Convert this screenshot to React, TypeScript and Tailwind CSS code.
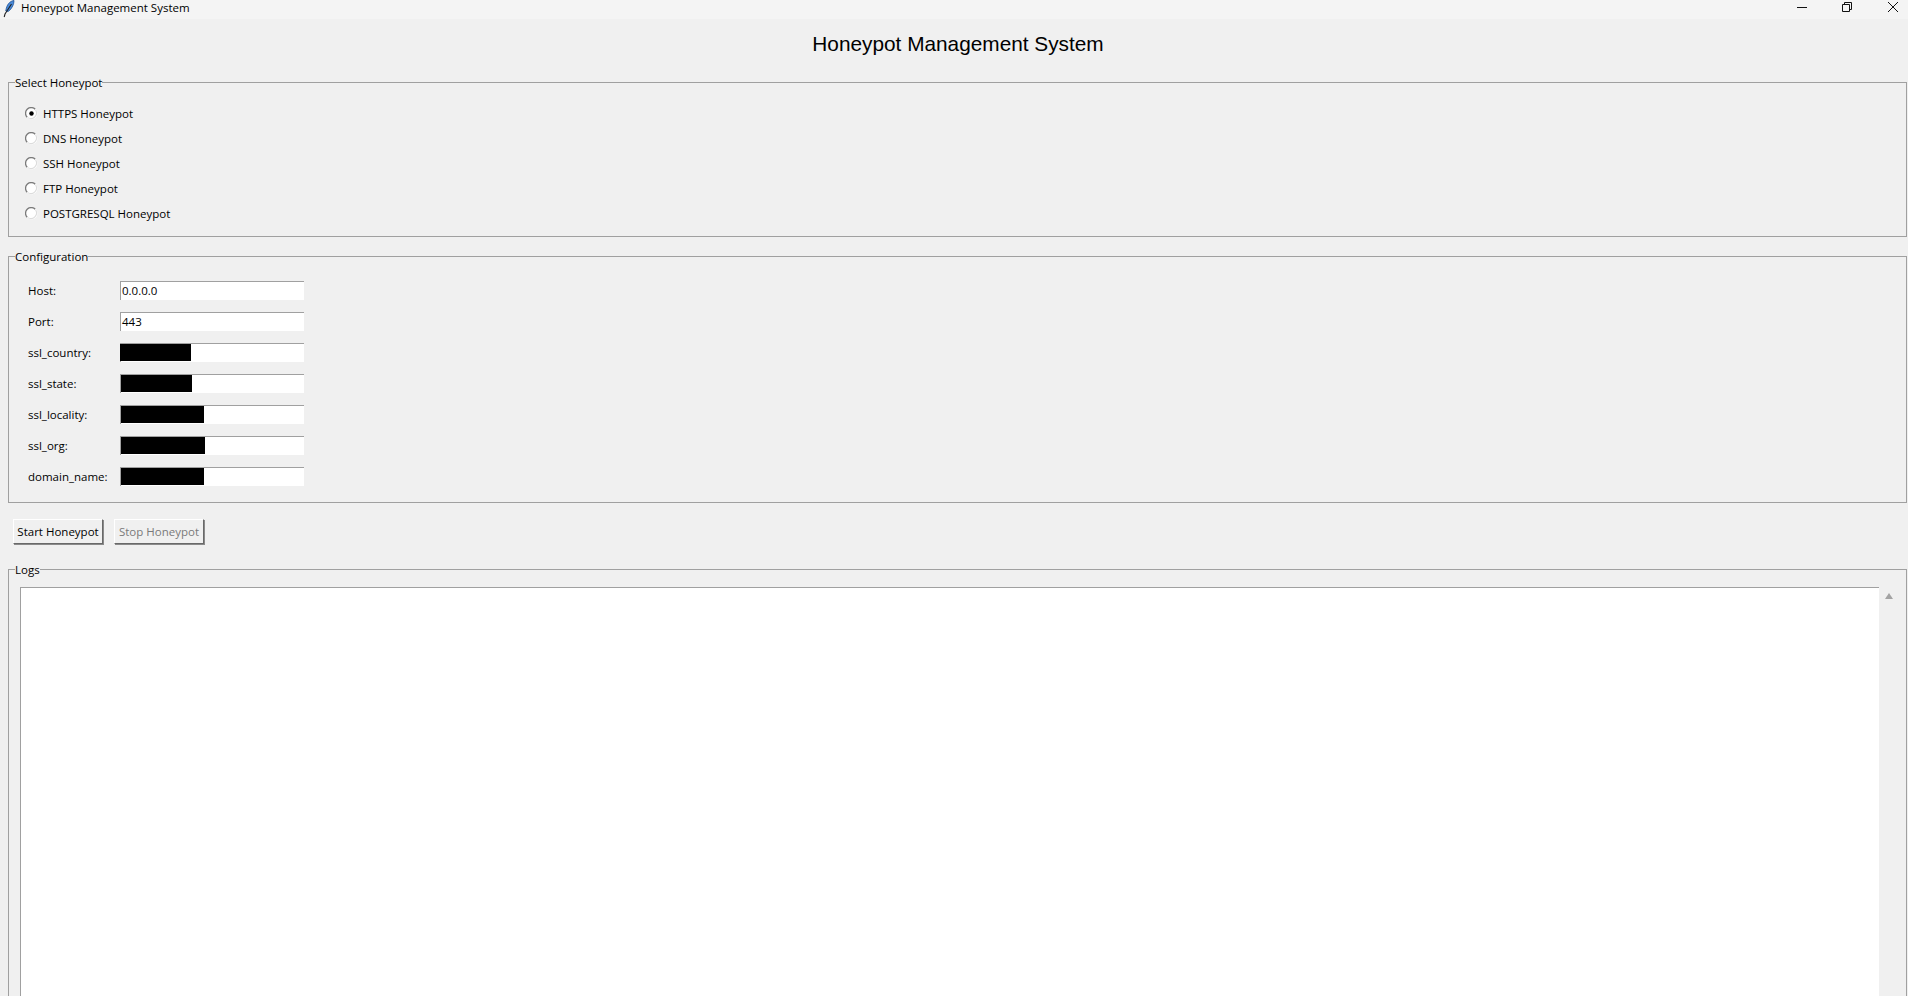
const radios = ["HTTPS Honeypot", "DNS Honeypot", "SSH Honeypot", "FTP Honeypot", "POSTGRESQL Honeypot"];
const fields: { label: string; value?: string; bar?: number; off?: boolean }[] = [
  { label: "Host:", value: "0.0.0.0" },
  { label: "Port:", value: "443" },
  { label: "ssl_country:", bar: 71, off: true },
  { label: "ssl_state:", bar: 71 },
  { label: "ssl_locality:", bar: 83 },
  { label: "ssl_org:", bar: 84 },
  { label: "domain_name:", bar: 83 },
];

function Radio({ on }: { on: boolean }) {
  return (
    <svg width="13" height="13" viewBox="0 0 13 13" className="shrink-0">
      <circle cx="6.5" cy="6.5" r="6" fill="#ffffff" />
      <path d="M2.2 10.2 A5.5 5.5 0 0 1 10.2 2.2" fill="none" stroke="#7a7a7a" strokeWidth="1.3" />
      <path d="M10.6 3 A5.5 5.5 0 0 1 3 10.6" fill="none" stroke="#dcdcdc" strokeWidth="1.1" />
      {on && <circle cx="6.5" cy="6.5" r="2.2" fill="#000000" />}
    </svg>
  );
}

function Group({ title, className, children }: { title: string; className: string; children: React.ReactNode }) {
  return (
    <fieldset className={`border border-[#a0a0a0] ml-2 mr-[1px] min-w-0 ${className}`}>
      <legend className="ml-[6px] h-[16px] text-[11.5px] leading-[18px] text-black">{title}</legend>
      {children}
    </fieldset>
  );
}

function Feather() {
  return (
    <svg width="12" height="18" viewBox="0 0 12 18" className="ml-[3px] shrink-0 -mt-[1px]">
      <path d="M11 0.5 C7 1 3.5 4.5 2.8 11 C4 12 5.5 11.5 6.5 10.5 C9 8 11 4.5 11 0.5Z" fill="#4a8ad8" stroke="#1c4f94" strokeWidth="0.8" />
      <path d="M8.5 4 L2 14 L1.2 17" stroke="#222222" strokeWidth="1.1" fill="none" />
    </svg>
  );
}

function Btn({ label, disabled }: { label: string; disabled?: boolean }) {
  return (
    <div
      className={`w-[90px] h-[25px] flex items-center justify-center border border-t-white border-l-white border-r-[#696969] border-b-[#696969] shadow-[1px_1px_0_#8a8a8a] text-[11.5px] bg-[#f0f0f0] ${disabled ? "text-[#7a7a7a]" : "text-black"}`}
    >
      {label}
    </div>
  );
}

export default function App() {
  return (
    <div className="w-[1908px] h-[996px] overflow-hidden bg-[#f0f0f0] font-['Open_Sans','Noto_Sans',sans-serif] text-[11.5px] text-black">
      <div className="h-[19px] bg-[#f4f4f4] flex items-center">
        <Feather />
        <span className="ml-[6px] text-[11.5px] leading-[16px] -mt-[4px]">Honeypot Management System</span>
        <div className="ml-auto flex items-center text-[#111111] -mt-[6px]">
          <svg width="12" height="12" viewBox="0 0 12 12" className="mr-[33px]"><path d="M1 6.5H11" stroke="#111" strokeWidth="1" /></svg>
          <svg width="12" height="12" viewBox="0 0 12 12" className="mr-[34px]"><path d="M1.5 3.5H8.5V10.5H1.5Z M3.5 3.5V1.5H10.5V8.5H8.5" fill="none" stroke="#111" strokeWidth="1" /></svg>
          <svg width="12" height="12" viewBox="0 0 12 12" className="mr-[9px]"><path d="M1 1L11 11M11 1L1 11" stroke="#111" strokeWidth="1" /></svg>
        </div>
      </div>

      <h1 className="h-[55px] pt-[12px] pl-[8px] text-center font-['Liberation_Sans',sans-serif] text-[20.8px] leading-[26px] text-black">
        Honeypot Management System
      </h1>

      <Group title="Select Honeypot" className="h-[163px]">
        <div className="flex flex-col pl-[16px] pt-[11px]">
          {radios.map((r, i) => (
            <div key={r} className="h-[25px] flex items-center gap-[5px]">
              <span className="-mt-[1px]"><Radio on={i === 0} /></span>
              <span className="leading-[16px]">{r}</span>
            </div>
          ))}
        </div>
      </Group>

      <Group title="Configuration" className="mt-[11px] h-[255px]">
        <div className="flex flex-col gap-[12px] pl-[19px] pt-[17px]">
          {fields.map((f) => (
            <div key={f.label} className="h-[19px] flex items-center">
              <span className="w-[92px] leading-[18px]">{f.label}</span>
              <div className="w-[184px] h-[19px] bg-white border-t border-l border-[#a0a0a0] flex items-start">
                {f.value && <span className="ml-[1px] leading-[18px]">{f.value}</span>}
                {f.bar && (
                  <div
                    className={`h-[17px] bg-black ${f.off ? "-ml-[1px]" : ""}`}
                    style={{ width: f.bar }}
                  />
                )}
              </div>
            </div>
          ))}
        </div>
      </Group>

      <div className="flex gap-[11px] ml-[13px] mt-[16px]">
        <Btn label="Start Honeypot" />
        <Btn label="Stop Honeypot" disabled />
      </div>

      <Group title="Logs" className="mt-[17px] h-[600px]">
        <div className="flex pl-[11px] pr-[8px] pt-[10px]">
          <div className="flex-1 h-[560px] bg-white border-t border-l border-[#a0a0a0]" />
          <div className="w-[19px] h-[560px] flex justify-center pt-[6px]">
            <svg width="8" height="6" viewBox="0 0 8 6"><path d="M4 0L8 6H0Z" fill="#a3a3a3" /></svg>
          </div>
        </div>
      </Group>
    </div>
  );
}
